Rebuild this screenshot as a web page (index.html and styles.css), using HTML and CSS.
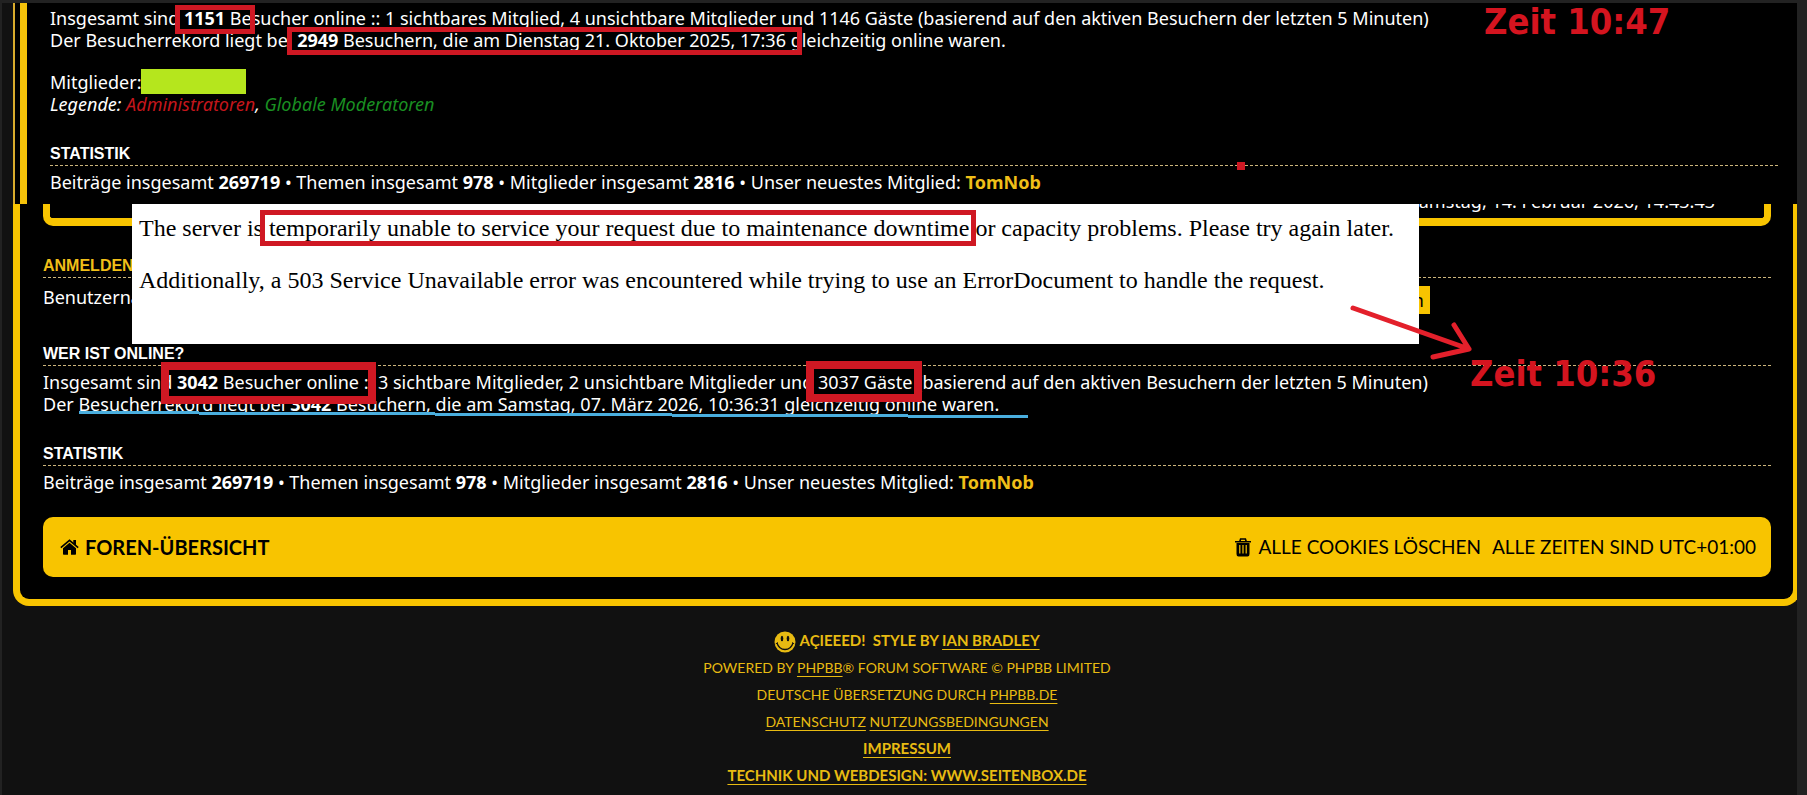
FILE: index.html
```html
<!DOCTYPE html>
<html lang="de">
<head>
<meta charset="utf-8">
<title>Foren-Übersicht</title>
<link rel="stylesheet" href="styles.css">
</head>
<body>
<div class="page">
  <section class="snapshot">
    <div class="snapshot-body">
      <p>Insgesamt sind <b>1151</b> Besucher online :: 1 sichtbares Mitglied, 4 unsichtbare Mitglieder und 1146 Gäste (basierend auf den aktiven Besuchern der letzten 5 Minuten)</p>
      <p>Der Besucherrekord liegt bei <b>2949</b> Besuchern, die am Dienstag 21. Oktober 2025, 17:36 gleichzeitig online waren.</p>
      <p class="members">Mitglieder:<span class="redacted"></span></p>
      <p class="legend">Legende: <a class="admin" href="#">Administratoren</a>, <a class="mod" href="#">Globale Moderatoren</a></p>
      <h3 class="heading">Statistik</h3>
      <p>Beiträge insgesamt <b>269719</b> • Themen insgesamt <b>978</b> • Mitglieder insgesamt <b>2816</b> • Unser neuestes Mitglied: <a class="user" href="#">TomNob</a></p>
    </div>
  </section>

  <main class="board">
    <div class="forum-end"><span class="last-post">Samstag, 14. Februar 2026, 14:43:43</span></div>
    <h3 class="heading login"><a href="#">Anmelden</a></h3>
    <form class="login-row">
      <label for="username">Benutzername:</label>
      <input id="username" type="text">
      <button type="button">Anmelden</button>
    </form>
    <h3 class="heading online">Wer ist online?</h3>
    <p>Insgesamt sind <b>3042</b> Besucher online :: 3 sichtbare Mitglieder, 2 unsichtbare Mitglieder und 3037 Gäste (basierend auf den aktiven Besuchern der letzten 5 Minuten)</p>
    <p>Der Besucherrekord liegt bei <b>3042</b> Besuchern, die am Samstag, 07. März 2026, 10:36:31 gleichzeitig online waren.</p>
    <h3 class="heading">Statistik</h3>
    <p>Beiträge insgesamt <b>269719</b> • Themen insgesamt <b>978</b> • Mitglieder insgesamt <b>2816</b> • Unser neuestes Mitglied: <a class="user" href="#">TomNob</a></p>
    <nav class="footbar">
      <a class="home" href="#">
        <svg width="19" height="16" viewBox="0 0 19 16" aria-hidden="true"><path d="M9.500 3.800 3 9.200V15q0 .7.700.7H8V11h3v4.700h4.300q.7 0 .7-.7V9.200z"/><path d="M.8 8.600 9.500 1.300l8.700 7.300" fill="none" stroke="#000" stroke-width="1.600"/><path d="M13.300 1H16v5.500l-2.700-2.300z"/></svg>
        <span>Foren-Übersicht</span>
      </a>
      <a class="cookies" href="#">
        <svg width="16" height="19" viewBox="0 0 16 19" aria-hidden="true"><path d="M1.500 5h13v11q0 2.500-2 2.500h-9q-2 0-2-2.500z"/><path d="M0 3.800h16M4.800 3.500l.8-2.500h4.800l.8 2.500" fill="none" stroke="#000" stroke-width="1.600"/><path d="M4.800 7v8.500M8 7v8.500M11.200 7v8.500" stroke="#f8c400" stroke-width="1.200"/></svg>
        <span>Alle Cookies löschen</span>
      </a>
      <span class="zone">Alle Zeiten sind UTC+01:00</span>
    </nav>
  </main>

  <footer class="credits">
    <p class="strong"><svg class="smiley" width="22" height="22" viewBox="0 0 22 22" aria-hidden="true"><circle cx="11" cy="11" r="10.500" fill="#e8bb12"/><ellipse cx="8" cy="7.500" rx="1.300" ry="2.800" fill="#111"/><ellipse cx="14" cy="7.500" rx="1.300" ry="2.800" fill="#111"/><path d="M3 12q2 6.500 8 6.500t8-6.500" fill="none" stroke="#111" stroke-width="1.300"/><path d="M1.800 12.800 4 11.600M20.200 12.800 18 11.600" stroke="#111"/></svg> Açieeed!&nbsp; Style by <a href="#">Ian Bradley</a></p>
    <p>Powered by <a href="#">phpBB</a>® Forum Software © phpBB Limited</p>
    <p>Deutsche Übersetzung durch <a href="#">phpBB.de</a></p>
    <p><a href="#">Datenschutz</a> <a href="#">Nutzungsbedingungen</a></p>
    <p class="strong"><a href="#">Impressum</a></p>
    <p class="strong"><a href="#">Technik und Webdesign: www.seitenbox.de</a></p>
  </footer>

  <aside class="error">
    <p>The server is temporarily unable to service your request due to maintenance downtime or capacity problems. Please try again later.</p>
    <p>Additionally, a 503 Service Unavailable error was encountered while trying to use an ErrorDocument to handle the request.</p>
  </aside>

  <svg class="marks" width="1807" height="795" viewBox="0 0 1807 795" aria-hidden="true">
    <g fill="none" stroke="#cf1823">
      <path stroke-width="5" d="M177.500 7.500h75v24h-75zM289.500 29.500h510v23h-510zM262.500 212.500h711v31h-711z"/>
      <path stroke-width="8" d="M165 366h207v34H165zM810 365h108v33H810z"/>
    </g>
    <path fill="#cf1823" d="M1237 162h8v8h-8z"/>
    <path fill="#4aaede" d="M79 411h120v1h236v1h237v1h236v1h120v3H908v-1H672v-1H435v-1H199v-1H79z"/>
    <path fill="none" stroke="#e3202b" stroke-width="5" stroke-linecap="round" stroke-linejoin="round" d="M1353 308l116 41M1454 325l15 24-36 8"/>
  </svg>
  <strong class="note note-late">Zeit 10:47</strong>
  <strong class="note note-early">Zeit 10:36</strong>
</div>
</body>
</html>
```
FILE: styles.css
```css
* { box-sizing: border-box; }
body {
  margin: 0;
  background: #111;
  color: #fff;
  font: 18px/22px "Noto Sans", sans-serif;
}
p, h3 { margin: 0; }
a { color: inherit; text-decoration: none; }
.page {
  position: relative;
  min-height: 100vh;
  overflow: hidden;
  border: solid #222;
  border-width: 3px 10px 0 2px;
}
.snapshot {
  margin-left: 11px;
  border-left: 2px solid #d9ab2c;
  padding-left: 5px;
  background: #000;
}
.snapshot-body {
  border-left: 7px solid #f5c20a;
  padding: 4px 19px 11px 23px;
  white-space: nowrap;
}
.members { display: flex; height: 22px; margin-top: 20px; }
.redacted { width: 105px; height: 25px; margin-top: -2px; background: #b5e61d; }
.legend { font-style: italic; }
.admin { color: #c4161c; }
.mod { color: #1a8f22; }
.heading {
  margin-top: 29px;
  margin-bottom: 5px;
  padding-bottom: 1px;
  border-bottom: 1px dashed #cdb67c;
  font: bold 16px/20px "Liberation Sans", sans-serif;
  text-transform: uppercase;
}
.user { color: #f0bf18; font-weight: bold; }
.board {
  margin: 0 -3px 0 11px;
  padding: 0 22px 22px 23px;
  border: 7px solid #f8c400;
  border-top: 0;
  border-radius: 0 0 16px 16px;
  background: #000;
  white-space: nowrap;
}
.forum-end {
  height: 22px;
  overflow: hidden;
  border: solid #f8c400;
  border-width: 0 7px 8px;
  border-radius: 0 0 10px 10px;
  text-align: right;
}
.last-post { display: block; margin: -14px 49px 0 0; }
.login { margin-top: 30px; color: #f0bf18; }
.login-row { display: flex; align-items: flex-start; height: 28px; margin-top: 8px; }
.login-row input { flex: 1; min-width: 0; margin: 0 8px; border: 0; background: #000; }
.login-row button {
  margin-right: 341px;
  height: 28px;
  padding: 0 6px;
  border: 0;
  background: #f8c400;
  font: inherit;
}
.online { margin-top: 30px; }
.footbar {
  display: flex;
  align-items: center;
  height: 60px;
  margin-top: 24px;
  padding: 0 15px 0 17px;
  border-radius: 10px;
  background: #f8c400;
  color: #000;
  font: 19px/24px Lato, sans-serif;
  text-transform: uppercase;
}
.footbar a { display: flex; align-items: center; gap: 7px; }
.footbar .home { margin-right: auto; gap: 6px; font-size: 20px; font-weight: bold; }
.zone { margin-left: 11px; }
.credits {
  margin: 21px -4px 0 11px;
  color: #e8bb12;
  font: 14px/27px Lato, sans-serif;
  text-align: center;
  text-transform: uppercase;
}
.credits .strong { font-size: 15px; font-weight: bold; }
.credits a { text-decoration: underline; text-underline-offset: 3px; }
.smiley { margin: -4px 0; vertical-align: middle; }
.error {
  position: absolute;
  top: 201px;
  left: 130px;
  width: 1287px;
  height: 140px;
  padding: 10px 7px;
  background: #fff;
  color: #000;
  font: 24px/28px "Liberation Serif", serif;
  white-space: nowrap;
}
.error p + p { margin-top: 24px; }
.marks { position: absolute; top: -3px; left: -2px; }
.note {
  position: absolute;
  color: #d4141f;
  font: bold 36px/44px "DejaVu Sans Condensed", "DejaVu Sans", sans-serif;
  white-space: nowrap;
}
.note-late { top: -3px; left: 1482px; }
.note-early { top: 349px; left: 1468px; }
```
